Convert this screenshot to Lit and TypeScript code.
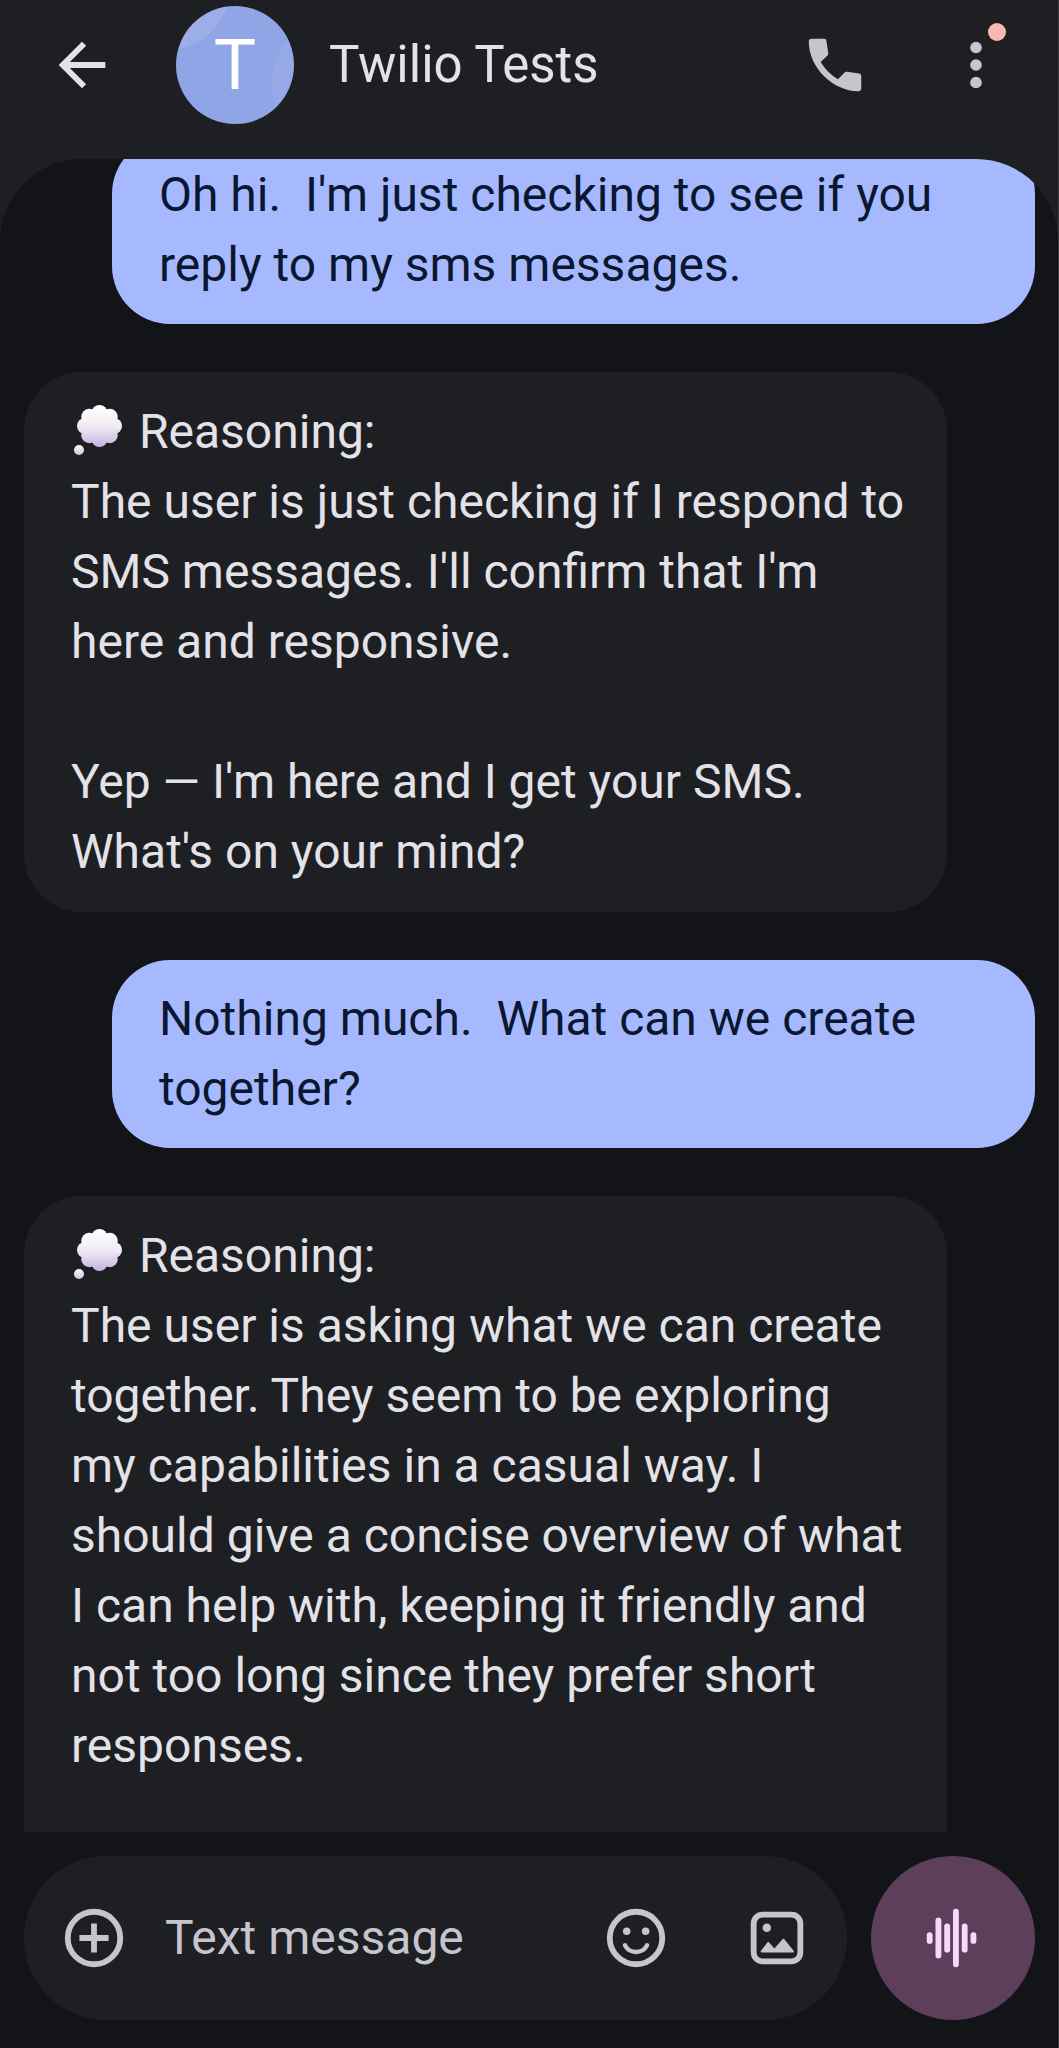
import { LitElement, html, css, svg } from "lit";
import { customElement, property } from "lit/decorators.js";
import { classMap } from "lit/directives/class-map.js";

interface Message {
  from: "me" | "them";
  thought?: boolean;
  text: string;
  continues?: boolean;
}

const messages: Message[] = [
  {
    from: "me",
    text: "Oh hi.  I'm just checking to see if you\nreply to my sms messages.",
  },
  {
    from: "them",
    thought: true,
    text:
      " Reasoning:\nThe user is just checking if I respond to\nSMS messages. I'll confirm that I'm\nhere and responsive.\n\n" +
      "Yep — I'm here and I get your SMS.\nWhat's on your mind?",
  },
  {
    from: "me",
    text: "Nothing much.  What can we create\ntogether?",
  },
  {
    from: "them",
    thought: true,
    continues: true,
    text:
      " Reasoning:\nThe user is asking what we can create\ntogether. They seem to be exploring\nmy capabilities in a casual way. I\n" +
      "should give a concise overview of what\nI can help with, keeping it friendly and\nnot too long since they prefer short\nresponses.",
  },
];

const icons = {
  back: svg`<path fill="currentColor" d="M20 11H7.83l5.59-5.59L12 4l-8 8 8 8 1.41-1.41L7.83 13H20z"/>`,
  call: svg`<path fill="currentColor" d="M8.3 3c.4 0 .7.3.75.7l.65 4.2c.05.3-.05.6-.25.8L7.1 11c1.5 2.5 3.4 4.4 5.9 5.9l2.3-2.35c.2-.2.5-.3.8-.25l4.2.65c.4.07.7.4.7.8v4.3c0 .55-.4.95-.95.95C11.2 21 3 12.8 3 3.95 3 3.4 3.4 3 3.95 3z"/>`,
  more: svg`<g fill="currentColor"><circle cx="12" cy="6" r="2"/><circle cx="12" cy="12" r="2"/><circle cx="12" cy="18" r="2"/></g>`,
  add: svg`<circle cx="12" cy="12" r="9" fill="none" stroke="currentColor" stroke-width="2"/><path fill="currentColor" d="M11 7h2v4h4v2h-4v4h-2v-4H7v-2h4z"/>`,
  emoji: svg`<circle cx="12" cy="12" r="9" fill="none" stroke="currentColor" stroke-width="2"/>
    <circle cx="8.8" cy="9.7" r="1.3" fill="currentColor"/><circle cx="15.3" cy="9.7" r="1.3" fill="currentColor"/>
    <path d="M8.2 14.5a4.3 4.3 0 0 0 7.6 0" fill="none" stroke="currentColor" stroke-width="1.5" stroke-linecap="round"/>`,
  image: svg`<rect x="4" y="4" width="16" height="16" rx="3" fill="none" stroke="currentColor" stroke-width="2"/>
    <circle cx="8.5" cy="8.5" r="1.45" fill="currentColor"/>
    <path fill="currentColor" d="M6.8 17c-.3 0-.5-.3-.3-.6l2.2-2.9c.2-.2.4-.2.6 0l1.8 2.1 2.8-3.2c.2-.2.4-.2.6 0l3.2 4c.2.3 0 .6-.3.6z"/>`,
  voice: svg`<path d="M4 11v2M7 6v12M10 8v8M13 3v18M16 8v8M19 11v2" stroke="currentColor" stroke-width="2" stroke-linecap="round"/>`,
};

@customElement("sms-icon")
export class SmsIcon extends LitElement {
  static styles = css`
    :host { display: block; width: 70px; height: 70px; }
    .glyph { display: block; width: 100%; height: 100%; }
  `;

  @property() name: keyof typeof icons = "add";

  render() {
    return html`<svg class="glyph" viewBox="0 0 24 24" aria-hidden="true">${icons[this.name]}</svg>`;
  }
}

@customElement("sms-bubble")
export class SmsBubble extends LitElement {
  static styles = css`
    :host { display: flex; flex-direction: column; flex: none; }
    :host([continues]) { flex: 1 0 auto; }
    .bubble {
      box-sizing: border-box;
      flex: 1 0 auto;
      margin: 0;
      border-radius: 58px;
      white-space: pre-wrap;
      font-size: 48px;
      line-height: 70px;
    }
    .them { margin-right: 88px; padding: 25px 32px 25px 47px; background: #1e1f23; color: #e3e2e8; }
    .me { margin-left: 88px; padding: 24px 32px 24px 47px; background: #a6b9ff; color: #0b1730; }
    .continues { border-bottom-left-radius: 0; border-bottom-right-radius: 0; }
    .thought { width: 56px; height: 56px; vertical-align: -9px; }
  `;

  @property({ attribute: false }) message!: Message;

  private thought() {
    const lobes = [0, 45, 90, 135, 180, 225, 270, 315].map((deg) => {
      const a = (deg * Math.PI) / 180;
      return svg`<circle cx=${28.5 + 14.5 * Math.cos(a)} cy=${25 + 13 * Math.sin(a)} r="8"/>`;
    });
    return html`<svg class="thought" viewBox="0 0 56 56" role="img" aria-label="💭">
      <defs>
        <linearGradient id="cloud" gradientUnits="userSpaceOnUse" x1="0" y1="4" x2="0" y2="46">
          <stop offset="0" stop-color="#ffffff" />
          <stop offset="0.5" stop-color="#f1ecf3" />
          <stop offset="1" stop-color="#c6b3e0" />
        </linearGradient>
        <linearGradient id="puff" x1="0" y1="0" x2="0" y2="1">
          <stop offset="0" stop-color="#ffffff" />
          <stop offset="1" stop-color="#cdc6d3" />
        </linearGradient>
      </defs>
      <g fill="url(#cloud)">${lobes}<ellipse cx="28.5" cy="25" rx="18" ry="17" /></g>
      <circle cx="8" cy="49" r="5" fill="url(#puff)" />
    </svg>`;
  }

  render() {
    const m = this.message;
    const cls = { bubble: true, me: m.from === "me", them: m.from === "them", continues: !!m.continues };
    return html`<p class=${classMap(cls)}>${m.thought ? this.thought() : ""}${m.text}</p>`;
  }
}

@customElement("app-root")
export class AppRoot extends LitElement {
  static styles = css`
    :host { display: block; font-family: Roboto, "Liberation Sans", sans-serif; }
    .screen {
      box-sizing: border-box;
      display: flex;
      flex-direction: column;
      height: 100vh;
      border-right: 1px solid #3c3e42;
      background: #1e1f23;
      color: #e3e2e8;
    }
    button {
      display: flex;
      flex: none;
      margin: 0;
      padding: 0;
      border: 0;
      background: none;
      color: #c6c5cd;
      cursor: pointer;
    }
    .bar {
      box-sizing: border-box;
      display: flex;
      flex: none;
      align-items: center;
      min-height: 159px;
      padding: 0 47px 29px 47px;
    }
    .back { color: #e3e2e8; }
    .avatar {
      display: grid;
      place-items: center;
      flex: none;
      width: 118px;
      height: 118px;
      margin-left: 59px;
      border-radius: 50%;
      background:
        radial-gradient(circle at -8px -18px, #9cade7 61px, transparent 62px),
        radial-gradient(circle at 152px 76px, #97a9e6 56px, transparent 57px),
        #90a5e6;
      color: #ffffff;
      font-size: 71px;
      line-height: 118px;
    }
    .name { flex: 1; min-width: 0; margin: 0 0 0 35px; font-size: 51px; font-weight: 400; line-height: 70px; }
    .actions { display: flex; flex: none; gap: 71px; }
    .menu { position: relative; }
    .badge {
      position: absolute;
      top: -7px;
      right: 5px;
      width: 18px;
      height: 18px;
      border-radius: 50%;
      background: #f6b9b4;
    }
    .thread {
      box-sizing: border-box;
      display: flex;
      flex: 1;
      flex-direction: column;
      gap: 48px;
      min-height: 0;
      padding: 0 23px 0 24px;
      overflow: hidden;
      border-radius: 82px 82px 0 0;
      background: #131418;
    }
    .thread sms-bubble:first-child { margin-top: -23px; }
    .composer {
      display: flex;
      flex: none;
      gap: 24px;
      padding: 24px 23px 28px 24px;
      background: #131418;
    }
    .field {
      box-sizing: border-box;
      display: flex;
      flex: 1;
      align-items: center;
      gap: 36px;
      min-width: 0;
      height: 164px;
      padding: 0 35px;
      border-radius: 82px;
      background: #1e1f23;
    }
    .input {
      flex: 1;
      min-width: 0;
      margin: 0;
      padding: 0;
      border: 0;
      outline: 0;
      background: none;
      color: #e3e2e8;
      font: 48px/70px Roboto, "Liberation Sans", sans-serif;
    }
    .input::placeholder { color: #c6c5cd; opacity: 1; }
    .voice {
      align-items: center;
      justify-content: center;
      width: 164px;
      height: 164px;
      border-radius: 50%;
      background: #5d3f5b;
      color: #fad8fc;
    }
  `;

  render() {
    return html`
      <main class="screen">
        <header class="bar">
          <button class="back" aria-label="Back"><sms-icon name="back"></sms-icon></button>
          <span class="avatar" aria-hidden="true">T</span>
          <h1 class="name">Twilio Tests</h1>
          <div class="actions">
            <button aria-label="Call"><sms-icon name="call"></sms-icon></button>
            <button class="menu" aria-label="More options">
              <sms-icon name="more"></sms-icon><span class="badge"></span>
            </button>
          </div>
        </header>
        <section class="thread" aria-label="Messages">
          ${messages.map((m) => html`<sms-bubble .message=${m} ?continues=${!!m.continues}></sms-bubble>`)}
        </section>
        <form class="composer" @submit=${(e: Event) => e.preventDefault()}>
          <div class="field">
            <button type="button" aria-label="Add attachment"><sms-icon name="add"></sms-icon></button>
            <input class="input" type="text" placeholder="Text message" aria-label="Text message" />
            <div class="actions">
              <button type="button" aria-label="Emoji"><sms-icon name="emoji"></sms-icon></button>
              <button type="button" aria-label="Gallery"><sms-icon name="image"></sms-icon></button>
            </div>
          </div>
          <button class="voice" type="button" aria-label="Voice message"><sms-icon name="voice"></sms-icon></button>
        </form>
      </main>
    `;
  }
}
